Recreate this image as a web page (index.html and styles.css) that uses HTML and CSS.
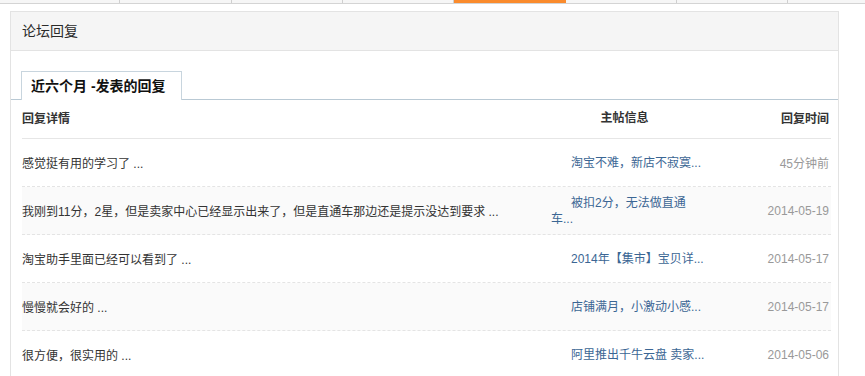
FILE: index.html
```html
<!DOCTYPE html>
<html lang="zh-CN">
<head>
<meta charset="utf-8">
<title>论坛回复</title>
<link rel="stylesheet" href="styles.css">
</head>
<body>
<div class="topnav">
  <span class="seg"></span>
  <span class="seg"></span>
  <span class="seg"></span>
  <span class="seg"></span>
  <span class="seg active"></span>
  <span class="seg"></span>
  <span class="seg"></span>
  <span class="seg"></span>
</div>
<div class="panel">
  <div class="panel-hd">论坛回复</div>
  <div class="panel-bd">
    <div class="tabs"><span class="tab">近六个月 -发表的回复</span></div>
    <div class="table">
      <div class="row thead">
        <div class="c1">回复详情</div>
        <div class="c2">主帖信息</div>
        <div class="c3">回复时间</div>
      </div>
      <div class="row">
        <div class="c1">感觉挺有用的学习了 ...</div>
        <div class="c2"><a class="link">淘宝不难，新店不寂寞...</a></div>
        <div class="c3">45分钟前</div>
      </div>
      <div class="row alt">
        <div class="c1">我刚到11分，2星，但是卖家中心已经显示出来了，但是直通车那边还是提示没达到要求 ...</div>
        <div class="c2"><a class="link">被扣2分，无法做直通车...</a></div>
        <div class="c3">2014-05-19</div>
      </div>
      <div class="row">
        <div class="c1">淘宝助手里面已经可以看到了 ...</div>
        <div class="c2"><a class="link">2014年【集市】宝贝详...</a></div>
        <div class="c3">2014-05-17</div>
      </div>
      <div class="row alt">
        <div class="c1">慢慢就会好的 ...</div>
        <div class="c2"><a class="link">店铺满月，小激动小感...</a></div>
        <div class="c3">2014-05-17</div>
      </div>
      <div class="row">
        <div class="c1">很方便，很实用的 ...</div>
        <div class="c2"><a class="link">阿里推出千牛云盘 卖家...</a></div>
        <div class="c3">2014-05-06</div>
      </div>
    </div>
  </div>
</div>
</body>
</html>
```
FILE: styles.css
```css
* { box-sizing: border-box; }
html, body { margin: 0; padding: 0; background: #fff; }
body {
  font-family: "Liberation Sans", "Noto Sans CJK SC", sans-serif;
  font-size: 12px;
  color: #333;
}
.topnav {
  display: flex;
  height: 4px;
  padding-left: 9px;
  background: #f6f6f6;
  border-bottom: 1px solid #d4d4d4;
  overflow: hidden;
}
.seg {
  flex: 0 0 111.33px;
  border-right: 1px solid #cfcfcf;
}
.seg.active {
  background: #fa8b2d;
  border-right-color: #fa8b2d;
}
.panel {
  margin: 7px 26px 0 10px;
  border: 1px solid #e3e3e3;
  border-bottom: none;
}
.panel-hd {
  height: 39px;
  line-height: 38px;
  padding-left: 11px;
  background: #f5f5f5;
  border-bottom: 1px solid #e3e3e3;
  font-size: 14px;
  color: #2a2a2a;
}
.panel-bd {
  padding-top: 20px;
}
.tabs {
  padding-left: 10px;
  border-bottom: 1px solid #b9c9d4;
  height: 29px;
}
.tab {
  display: inline-block;
  position: relative;
  height: 29px;
  line-height: 28px;
  padding: 0 15px 0 9px;
  background: #fff;
  border: 1px solid #c8d5de;
  border-bottom: none;
  font-size: 14px;
  font-weight: bold;
  color: #111;
}
.table {
  margin: 0 7px 0 11px;
}
.row {
  display: grid;
  grid-template-columns: 529px 155px 1fr;
  align-items: center;
  height: 48px;
  border-bottom: 1px dashed #e4e4e4;
}
.row.alt { background: #fafafa; }
.row.thead {
  height: 39px;
  padding-bottom: 3px;
  border-bottom: 1px solid #e6e6e6;
  font-weight: bold;
  color: #333;
}
.c1 { white-space: nowrap; }
.c2 {
  text-indent: 20px;
  line-height: 16px;
}
.link { color: #3b6694; text-decoration: none; }
.c3 {
  text-align: right;
  padding-right: 2px;
  color: #999;
}
.thead .c2 { text-align: center; text-indent: 0; padding-right: 8px; }
.thead .c3 { color: #333; }
```
